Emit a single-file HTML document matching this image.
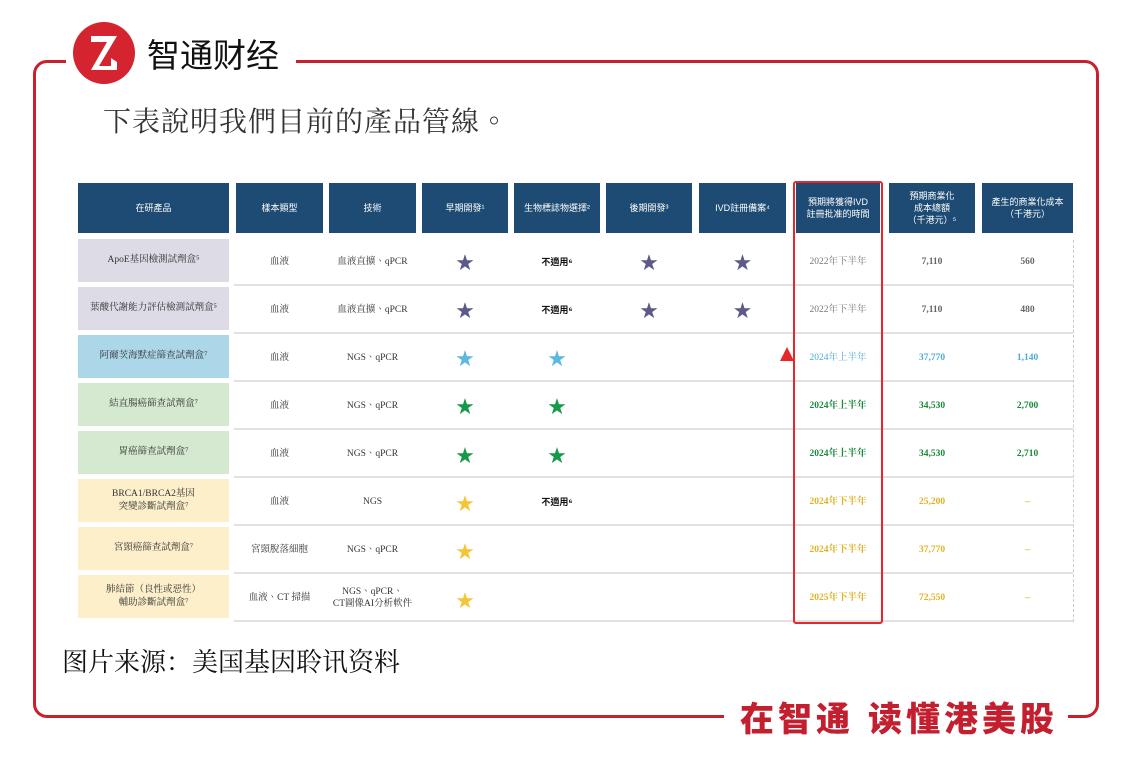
<!DOCTYPE html>
<html><head><meta charset="utf-8"><style>
*{margin:0;padding:0;box-sizing:border-box}
body{width:1132px;height:770px;background:#fff;position:relative;overflow:hidden;font-family:"Liberation Serif","Noto Serif CJK SC",serif}
.a{position:absolute}
.frame{left:33px;top:60px;width:1066px;height:658px;border:3px solid #c8202e;border-radius:14px}
.hd{position:absolute;top:183px;height:50px;background:#1d4b73;color:#fff;font-size:9px;display:flex;align-items:center;justify-content:center;text-align:center;line-height:12px;font-family:"Liberation Sans","Noto Sans CJK TC",sans-serif}
.lc{position:absolute;left:78px;width:151px;height:43px;display:flex;align-items:center;justify-content:center;text-align:center;font-size:9.5px;color:#333;line-height:13px;font-family:"Liberation Serif","Noto Serif CJK TC",serif}
.c{position:absolute;height:43px;display:flex;align-items:center;justify-content:center;text-align:center;font-size:9.5px;color:#333;line-height:12px;font-family:"Liberation Serif","Noto Serif CJK TC",serif}
.st{font-size:22px;font-family:"DejaVu Sans",sans-serif}
.ln{position:absolute;left:234px;width:839px;height:2px;background:#e2e2e2}
</style></head><body>
<div class="a frame"></div>
<div class="a" style="left:66px;top:20px;width:230px;height:70px;background:#fff"></div>
<div class="a" style="left:724px;top:700px;width:344px;height:36px;background:#fff"></div>
<svg class="a" style="left:73px;top:22px" width="62" height="62" viewBox="0 0 62 62"><circle cx="31" cy="31" r="31" fill="#d42430"/><path d="M18 14H44L26 44H38V36L44 40V48H18L34 20H18Z" fill="#fff"/></svg>
<div class="a" style="left:147px;top:32px;font-size:33px;color:#111;font-family:'Noto Sans CJK SC',sans-serif;line-height:42px">智通财经</div>
<div class="a" style="left:103px;top:100px;font-size:28px;color:#333;font-family:'Noto Serif CJK TC',serif;line-height:40px;letter-spacing:1px">下表說明我們目前的產品管線。</div>

<div class="hd" style="left:78px;width:151px">在研產品</div>
<div class="hd" style="left:236px;width:87px">樣本類型</div>
<div class="hd" style="left:329px;width:87px">技術</div>
<div class="hd" style="left:422px;width:86px">早期開發¹</div>
<div class="hd" style="left:514px;width:86px">生物標誌物選擇²</div>
<div class="hd" style="left:606px;width:86px">後期開發³</div>
<div class="hd" style="left:699px;width:87px">IVD註冊備案⁴</div>
<div class="hd" style="left:796px;width:84px">預期將獲得IVD<br>註冊批准的時間</div>
<div class="hd" style="left:889px;width:86px">預期商業化<br>成本總額<br>（千港元）⁵</div>
<div class="hd" style="left:982px;width:91px">產生的商業化成本<br>（千港元）</div>

<div class="ln" style="top:284px"></div><div class="ln" style="top:332px"></div><div class="ln" style="top:380px"></div><div class="ln" style="top:428px"></div><div class="ln" style="top:476px"></div><div class="ln" style="top:524px"></div><div class="ln" style="top:572px"></div><div class="ln" style="top:620px"></div>

<div class="lc" style="top:239px;background:#dcdbe6">ApoE基因檢測試劑盒⁵</div>
<div class="lc" style="top:287px;background:#dcdbe6">葉酸代謝能力評估檢測試劑盒⁵</div>
<div class="lc" style="top:335px;background:#acd7e9">阿爾茨海默症篩查試劑盒⁷</div>
<div class="lc" style="top:383px;background:#d4e9cf">結直腸癌篩查試劑盒⁷</div>
<div class="lc" style="top:431px;background:#d4e9cf">胃癌篩查試劑盒⁷</div>
<div class="lc" style="top:479px;background:#fcefca">BRCA1/BRCA2基因<br>突變診斷試劑盒⁷</div>
<div class="lc" style="top:527px;background:#fcefca">宮頸癌篩查試劑盒⁷</div>
<div class="lc" style="top:575px;background:#fcefca">肺結節（良性或惡性）<br>輔助診斷試劑盒⁷</div>

<div class="c" style="left:236px;width:87px;top:240px">血液</div><div class="c" style="left:329px;width:87px;top:240px">血液直擴、qPCR</div>
<div class="c" style="left:236px;width:87px;top:288px">血液</div><div class="c" style="left:329px;width:87px;top:288px">血液直擴、qPCR</div>
<div class="c" style="left:236px;width:87px;top:336px">血液</div><div class="c" style="left:329px;width:87px;top:336px">NGS、qPCR</div>
<div class="c" style="left:236px;width:87px;top:384px">血液</div><div class="c" style="left:329px;width:87px;top:384px">NGS、qPCR</div>
<div class="c" style="left:236px;width:87px;top:432px">血液</div><div class="c" style="left:329px;width:87px;top:432px">NGS、qPCR</div>
<div class="c" style="left:236px;width:87px;top:480px">血液</div><div class="c" style="left:329px;width:87px;top:480px">NGS</div>
<div class="c" style="left:236px;width:87px;top:528px">宮頸脫落細胞</div><div class="c" style="left:329px;width:87px;top:528px">NGS、qPCR</div>
<div class="c" style="left:236px;width:87px;top:576px">血液、CT 掃描</div><div class="c" style="left:329px;width:87px;top:576px">NGS、qPCR、<br>CT圖像AI分析軟件</div>

<div class="c st" style="left:422px;width:86px;top:242px;color:#5b5a88">★</div>
<div class="c st" style="left:606px;width:86px;top:242px;color:#5b5a88">★</div>
<div class="c st" style="left:699px;width:87px;top:242px;color:#5b5a88">★</div>
<div class="c" style="left:514px;width:86px;top:240px;font-weight:bold;color:#111;font-family:'Noto Sans CJK TC',sans-serif;font-size:9px">不適用⁶</div>
<div class="c st" style="left:422px;width:86px;top:290px;color:#5b5a88">★</div>
<div class="c st" style="left:606px;width:86px;top:290px;color:#5b5a88">★</div>
<div class="c st" style="left:699px;width:87px;top:290px;color:#5b5a88">★</div>
<div class="c" style="left:514px;width:86px;top:288px;font-weight:bold;color:#111;font-family:'Noto Sans CJK TC',sans-serif;font-size:9px">不適用⁶</div>
<div class="c st" style="left:422px;width:86px;top:338px;color:#5cb8de">★</div>
<div class="c st" style="left:514px;width:86px;top:338px;color:#5cb8de">★</div>
<div class="c st" style="left:422px;width:86px;top:386px;color:#17994a">★</div>
<div class="c st" style="left:514px;width:86px;top:386px;color:#17994a">★</div>
<div class="c st" style="left:422px;width:86px;top:435px;color:#17994a">★</div>
<div class="c st" style="left:514px;width:86px;top:435px;color:#17994a">★</div>
<div class="c st" style="left:422px;width:86px;top:483px;color:#f2c636">★</div>
<div class="c" style="left:514px;width:86px;top:480px;font-weight:bold;color:#111;font-family:'Noto Sans CJK TC',sans-serif;font-size:9px">不適用⁶</div>
<div class="c st" style="left:422px;width:86px;top:531px;color:#f2c636">★</div>
<div class="c st" style="left:422px;width:86px;top:580px;color:#f2c636">★</div>

<div class="c" style="left:796px;width:84px;top:240px;color:#777">2022年下半年</div><div class="c" style="left:889px;width:86px;top:240px;color:#666;font-weight:bold">7,110</div><div class="c" style="left:982px;width:91px;top:240px;color:#666;font-weight:bold">560</div>
<div class="c" style="left:796px;width:84px;top:288px;color:#777">2022年下半年</div><div class="c" style="left:889px;width:86px;top:288px;color:#666;font-weight:bold">7,110</div><div class="c" style="left:982px;width:91px;top:288px;color:#666;font-weight:bold">480</div>
<div class="c" style="left:796px;width:84px;top:336px;color:#4eaad6">2024年上半年</div><div class="c" style="left:889px;width:86px;top:336px;color:#4eaad6;font-weight:bold">37,770</div><div class="c" style="left:982px;width:91px;top:336px;color:#4eaad6;font-weight:bold">1,140</div>
<div class="c" style="left:796px;width:84px;top:384px;color:#178a3a;font-weight:bold">2024年上半年</div><div class="c" style="left:889px;width:86px;top:384px;color:#178a3a;font-weight:bold">34,530</div><div class="c" style="left:982px;width:91px;top:384px;color:#178a3a;font-weight:bold">2,700</div>
<div class="c" style="left:796px;width:84px;top:432px;color:#178a3a;font-weight:bold">2024年上半年</div><div class="c" style="left:889px;width:86px;top:432px;color:#178a3a;font-weight:bold">34,530</div><div class="c" style="left:982px;width:91px;top:432px;color:#178a3a;font-weight:bold">2,710</div>
<div class="c" style="left:796px;width:84px;top:480px;color:#e0b124;font-weight:bold">2024年下半年</div><div class="c" style="left:889px;width:86px;top:480px;color:#e0b124;font-weight:bold">25,200</div><div class="c" style="left:982px;width:91px;top:480px;color:#e0b124;font-weight:bold">–</div>
<div class="c" style="left:796px;width:84px;top:528px;color:#e0b124;font-weight:bold">2024年下半年</div><div class="c" style="left:889px;width:86px;top:528px;color:#e0b124;font-weight:bold">37,770</div><div class="c" style="left:982px;width:91px;top:528px;color:#e0b124;font-weight:bold">–</div>
<div class="c" style="left:796px;width:84px;top:576px;color:#e0b124;font-weight:bold">2025年下半年</div><div class="c" style="left:889px;width:86px;top:576px;color:#e0b124;font-weight:bold">72,550</div><div class="c" style="left:982px;width:91px;top:576px;color:#e0b124;font-weight:bold">–</div>

<div class="a" style="left:1073px;top:240px;width:0;height:382px;border-left:1px dashed #ccc"></div>
<div class="a" style="left:793px;top:181px;width:90px;height:443px;border:2.5px solid #e8262a;border-radius:3px"></div>
<svg class="a" style="left:779px;top:346px" width="16" height="16"><path d="M8 1L15 15H1Z" fill="#e8262a"/></svg>

<div class="a" style="left:62px;top:644px;font-size:26px;color:#111;font-family:'Noto Serif CJK SC',serif;line-height:34px">图片来源：美国基因聆讯资料</div>
<div class="a" style="left:740px;top:697px;font-size:34px;color:#c41f2f;font-weight:900;font-family:'Noto Sans CJK SC',sans-serif;line-height:40px;letter-spacing:4px;white-space:nowrap">在智通<span style="display:inline-block;width:14px"></span>读懂港美股</div>
</body></html>
